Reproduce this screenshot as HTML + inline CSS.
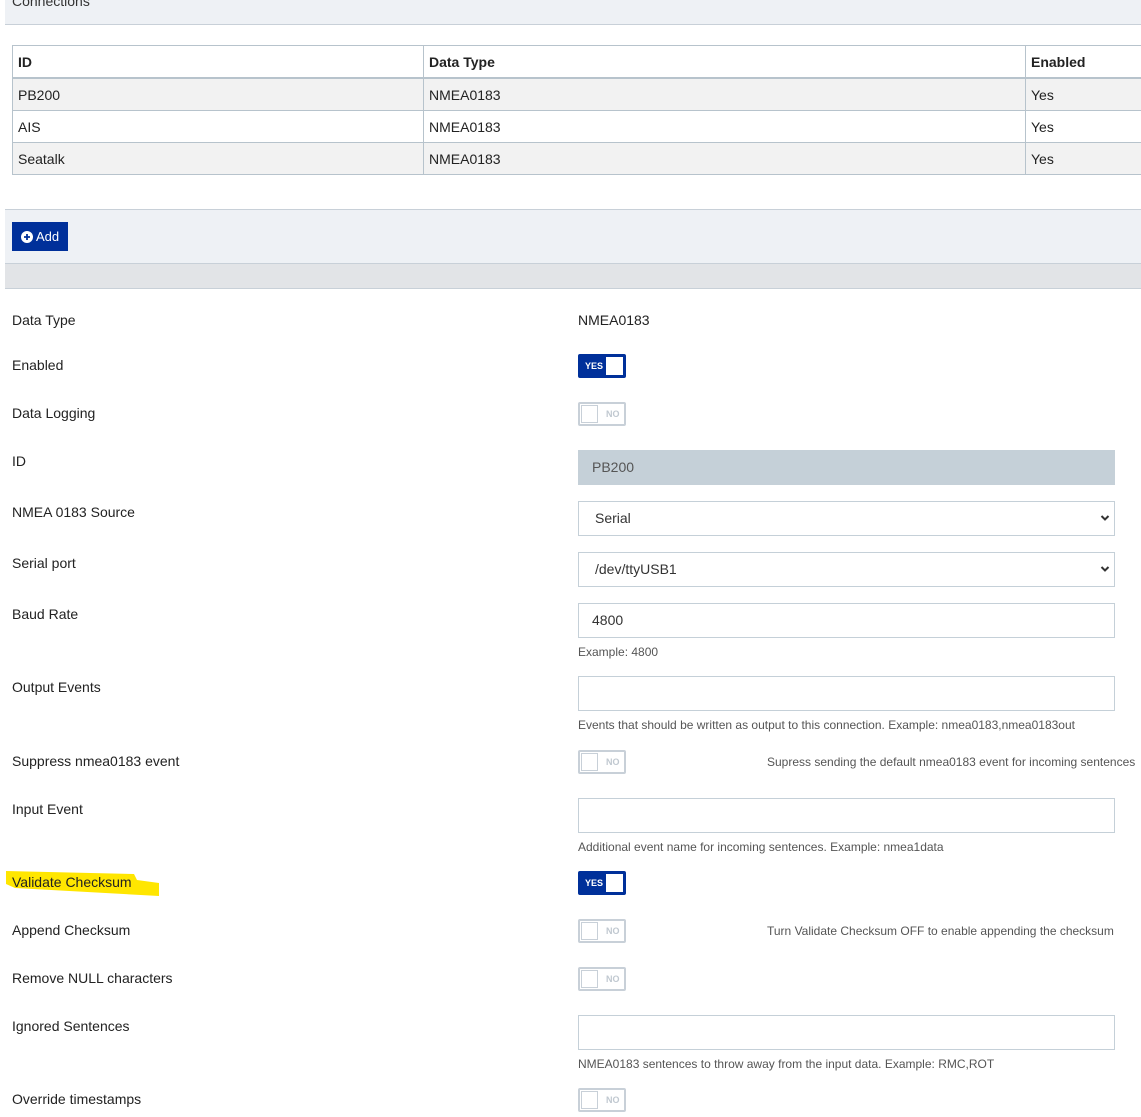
<!DOCTYPE html>
<html><head><style>
body{margin:0;width:1141px;height:1117px;position:relative;overflow:hidden;background:#fff;font-family:"Liberation Sans",sans-serif;color:#222;font-size:14px}
.a{position:absolute}
.lbl{position:absolute;left:12px;line-height:18px;font-size:14px;color:#222}
.tg{position:absolute;left:578px;width:44px;height:20px;border:2px solid #c8d0d8;border-radius:2px;background:#fff}
.tg .k{position:absolute;left:1px;top:1px;width:17px;height:18px;border:1px solid #c8d0d8;box-sizing:border-box;background:#fff}
.tg .t{position:absolute;left:26px;top:5px;font-size:9px;font-weight:bold;color:#c0c8d0}
.tg.on{background:#00309a;border-color:#00309a}
.tg.on .k{left:26px;top:1px;width:17px;border:none}
.tg.on .t{left:5px;color:#fff}
.in{position:absolute;left:578px;width:537px;height:35px;box-sizing:border-box;border:1px solid #c5d0d8;background:#fff;font-size:14px;line-height:33px;padding-left:13px;color:#333}
.sel svg{position:absolute;right:4px;top:12px}
.help{position:absolute;left:578px;font-size:12px;color:#555;line-height:14px}
table{border-collapse:collapse}
td{border:1px solid #b7c3cc;padding:0 5px;font-size:14px;height:31px}
</style></head><body>
<div class="a" style="left:5px;top:0;width:1136px;height:24px;background:#eef1f5;border-bottom:1px solid #c8d0d8"></div>
<div class="a" style="left:12px;top:-7px;font-size:14px;color:#333">Connections</div>
<table class="a" style="left:12px;top:45px;width:1135px">
<tr><td style="width:400px;height:31px;font-weight:bold;border-bottom:2px solid #b7c3cc">ID</td><td style="width:591px;font-weight:bold;border-bottom:2px solid #b7c3cc">Data Type</td><td style="font-weight:bold;border-bottom:2px solid #b7c3cc">Enabled</td></tr>
<tr style="background:#f2f2f2"><td>PB200</td><td>NMEA0183</td><td>Yes</td></tr>
<tr><td>AIS</td><td>NMEA0183</td><td>Yes</td></tr>
<tr style="background:#f2f2f2"><td style="height:30px">Seatalk</td><td>NMEA0183</td><td>Yes</td></tr>
</table>
<div class="a" style="left:5px;top:209px;width:1136px;height:54px;background:#eef1f5;border-top:1px solid #c8d0d8;box-sizing:border-box"></div>
<div class="a" style="left:12px;top:222px;width:56px;height:29px;background:#00309a;color:#fff;font-size:13px;line-height:29px">
<svg class="a" style="left:9px;top:9px" width="12" height="12" viewBox="0 0 12 12"><circle cx="6" cy="6" r="6" fill="#fff"/><path d="M6 3v6M3 6h6" stroke="#00309a" stroke-width="1.8"/></svg>
<span style="position:absolute;left:24px">Add</span></div>
<div class="a" style="left:5px;top:263px;width:1136px;height:26px;background:#e2e4e7;border-top:1px solid #c8d0d8;border-bottom:1px solid #c8d0d8;box-sizing:border-box"></div>

<div class="lbl" style="top:311px">Data Type</div><div class="a" style="left:578px;top:311px;line-height:18px">NMEA0183</div>
<div class="lbl" style="top:356px">Enabled</div><div class="tg on" style="top:354px"><span class="t">YES</span><span class="k"></span></div>
<div class="lbl" style="top:404px">Data Logging</div><div class="tg" style="top:402px"><span class="k"></span><span class="t">NO</span></div>
<div class="lbl" style="top:452px">ID</div><div class="in" style="top:450px;background:#c5d0d8;border-color:#c5d0d8;color:#555">PB200</div>
<div class="lbl" style="top:503px">NMEA 0183 Source</div><div class="in sel" style="top:501px;padding-left:16px">Serial<svg width="10" height="8" viewBox="0 0 10 8"><path d="M1.5 2l3.5 3.5 3.5-3.5" fill="none" stroke="#333" stroke-width="2"/></svg></div>
<div class="lbl" style="top:554px">Serial port</div><div class="in sel" style="top:552px;padding-left:16px">/dev/ttyUSB1<svg width="10" height="8" viewBox="0 0 10 8"><path d="M1.5 2l3.5 3.5 3.5-3.5" fill="none" stroke="#333" stroke-width="2"/></svg></div>
<div class="lbl" style="top:605px">Baud Rate</div><div class="in" style="top:603px">4800</div>
<div class="help" style="top:645px">Example: 4800</div>
<div class="lbl" style="top:678px">Output Events</div><div class="in" style="top:676px"></div>
<div class="help" style="top:718px">Events that should be written as output to this connection. Example: nmea0183,nmea0183out</div>
<div class="lbl" style="top:752px">Suppress nmea0183 event</div><div class="tg" style="top:750px"><span class="k"></span><span class="t">NO</span></div>
<div class="a" style="left:767px;top:755px;font-size:12px;color:#555;white-space:nowrap">Supress sending the default nmea0183 event for incoming sentences</div>
<div class="lbl" style="top:800px">Input Event</div><div class="in" style="top:798px"></div>
<div class="help" style="top:840px">Additional event name for incoming sentences. Example: nmea1data</div>
<svg class="a" style="left:3px;top:866px" width="156" height="32"><path d="M3 5L131 8L134 14L156 17L156 30L12 22L3 18Z" fill="#ffe600"/></svg>
<div class="lbl" style="top:873px">Validate Checksum</div><div class="tg on" style="top:871px"><span class="t">YES</span><span class="k"></span></div>
<div class="lbl" style="top:921px">Append Checksum</div><div class="tg" style="top:919px"><span class="k"></span><span class="t">NO</span></div>
<div class="a" style="left:767px;top:924px;font-size:12px;color:#555;white-space:nowrap">Turn Validate Checksum OFF to enable appending the checksum</div>
<div class="lbl" style="top:969px">Remove NULL characters</div><div class="tg" style="top:967px"><span class="k"></span><span class="t">NO</span></div>
<div class="lbl" style="top:1017px">Ignored Sentences</div><div class="in" style="top:1015px"></div>
<div class="help" style="top:1057px">NMEA0183 sentences to throw away from the input data. Example: RMC,ROT</div>
<div class="lbl" style="top:1090px">Override timestamps</div><div class="tg" style="top:1088px"><span class="k"></span><span class="t">NO</span></div>
</body></html>
